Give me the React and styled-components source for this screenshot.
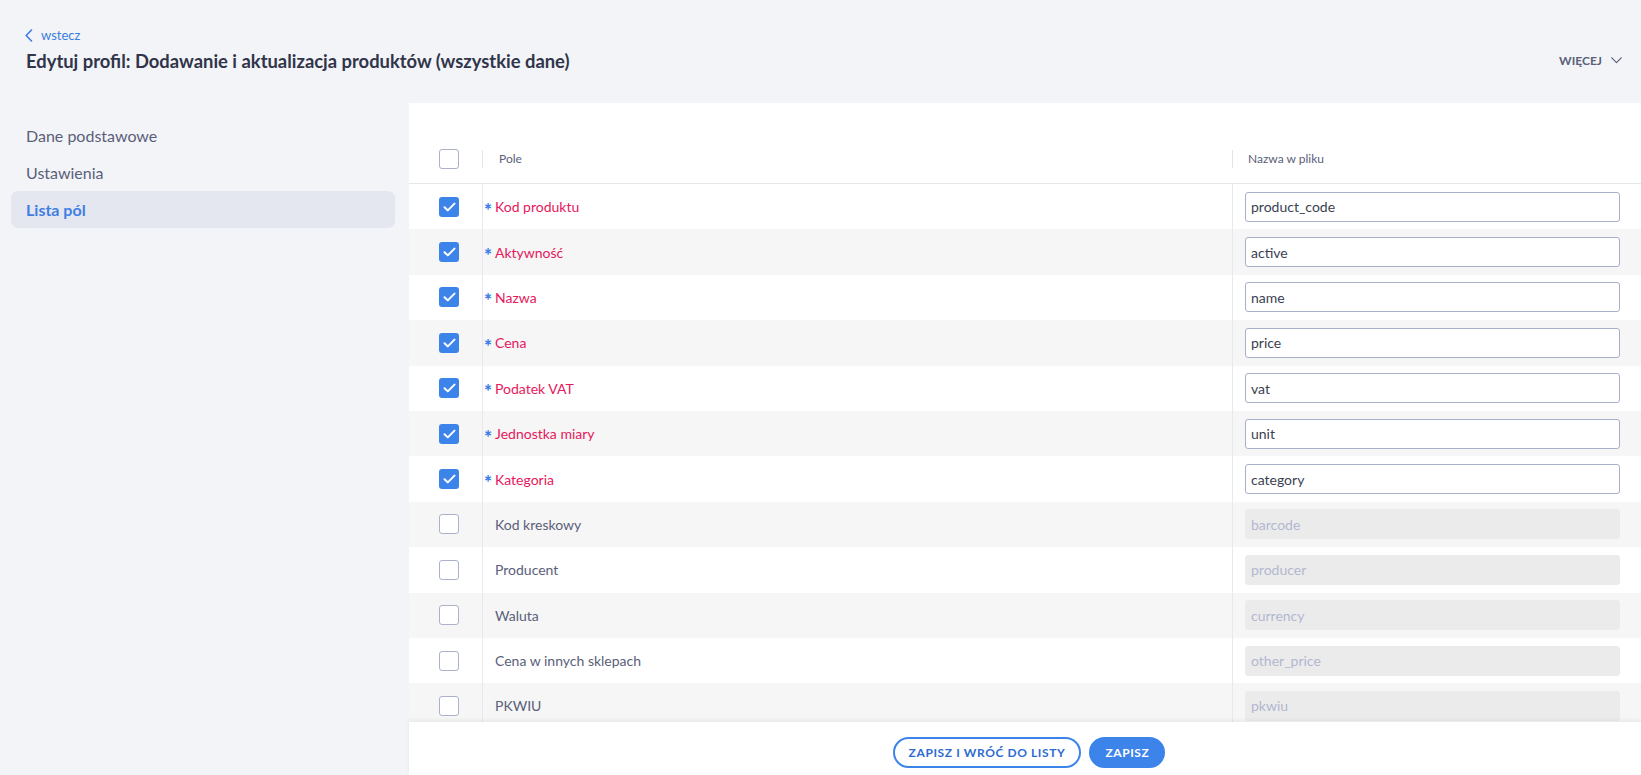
import React from "react";
import styled, { createGlobalStyle } from "styled-components";

const GlobalStyle = createGlobalStyle`
  html, body { margin: 0; padding: 0; }
  body {
    background: #f3f4f8;
    font-family: Lato, "Noto Sans", sans-serif;
    color: #4e546c;
    overflow: hidden;
  }
  * { box-sizing: border-box; }
`;

const Page = styled.div`
  height: 100vh;
  display: flex;
  flex-direction: column;
`;

const Header = styled.header`
  height: 103px;
  flex: none;
  display: flex;
  align-items: flex-start;
  justify-content: space-between;
  padding: 26px 19px 0 25px;
`;

const TitleBlock = styled.div`
  display: flex;
  flex-direction: column;
`;

const BackLink = styled.a`
  display: inline-flex;
  align-items: center;
  gap: 8px;
  font-size: 13px;
  color: #3b7ddd;
  text-decoration: none;
  height: 18px;
  cursor: pointer;
`;

const Title = styled.h1`
  margin: 5px 0 0 1px;
  font-size: 18.4px;
  font-weight: 700;
  color: #30354a;
  line-height: 24px;
`;

const MoreButton = styled.button`
  margin-top: 27px;
  display: inline-flex;
  align-items: center;
  gap: 9px;
  background: none;
  border: 0;
  padding: 0;
  font-family: inherit;
  font-size: 12px;
  font-weight: 700;
  color: #5a6079;
  cursor: pointer;
`;

const Main = styled.div`
  flex: 1;
  min-height: 0;
  display: flex;
`;

const Sidebar = styled.nav`
  width: 409px;
  flex: none;
  padding: 14px 14px 0 11px;
  display: flex;
  flex-direction: column;
`;

const NavItem = styled.a`
  height: 37px;
  display: flex;
  align-items: center;
  padding-left: 15px;
  border-radius: 7px;
  font-size: 16px;
  cursor: pointer;
  color: ${(p) => (p.$active ? "#3f7fe0" : "#5a5f78")};
  font-weight: ${(p) => (p.$active ? 700 : 400)};
  background: ${(p) => (p.$active ? "#e4e7f0" : "transparent")};
`;

const Panel = styled.section`
  flex: 1;
  min-width: 0;
  background: #ffffff;
  display: flex;
  flex-direction: column;
`;

const TableArea = styled.div`
  flex: 1;
  min-height: 0;
  overflow: hidden;
  padding-top: 31px;
`;

const cols = "73px 750px 1fr";

const HeadRow = styled.div`
  display: grid;
  grid-template-columns: ${cols};
  height: 50px;
  align-items: center;
  border-bottom: 1px solid #e6e7eb;
`;

const HeadSep = styled.div`
  display: flex;
  align-items: center;
  height: 100%;
  font-size: 12px;
  color: #5a6079;
  &::before {
    content: "";
    width: 1px;
    height: 18px;
    background: #e3e4e8;
    margin-right: ${(p) => p.$gap}px;
  }
`;

const Row = styled.div`
  display: grid;
  grid-template-columns: ${cols};
  height: 45.4px;
  background: ${(p) => (p.$alt ? "#f6f6f6" : "#ffffff")};
`;

const CheckCell = styled.div`
  display: flex;
  align-items: center;
  padding-left: 30px;
`;

const FieldCell = styled.div`
  display: flex;
  align-items: center;
  border-left: 1px solid #e8e9ec;
  padding-left: 1px;
  font-size: 14px;
  color: ${(p) => (p.$required ? "#e5185c" : "#5a6079")};
`;

const Star = styled.span`
  width: 11px;
  flex: none;
  color: #3d80e6;
  font-size: 19px;
  font-weight: 900;
  line-height: 1;
  margin-top: 5px;
`;

const NameCell = styled.div`
  display: flex;
  align-items: center;
  border-left: 1px solid #e8e9ec;
  padding-left: 12px;
`;

const NameInput = styled.input`
  width: 375px;
  height: 30px;
  border-radius: 3px;
  padding: 0 5px;
  font-family: inherit;
  font-size: 14px;
  outline: none;
  border: 1px solid ${(p) => (p.disabled ? "#ebebeb" : "#a8b0c9")};
  background: ${(p) => (p.disabled ? "#ebebeb" : "#ffffff")};
  color: ${(p) => (p.disabled ? "#b2b8d0" : "#3a3f52")};
  &:disabled { -webkit-text-fill-color: #b2b8d0; opacity: 1; }
`;

const Box = styled.span`
  width: 20px;
  height: 20px;
  border-radius: 3px;
  display: inline-flex;
  align-items: center;
  justify-content: center;
  background: ${(p) => (p.$checked ? "#3d84ea" : "#ffffff")};
  border: ${(p) => (p.$checked ? "none" : "1.5px solid #aab2cc")};
`;

const Footer = styled.footer`
  flex: none;
  height: 53px;
  background: #ffffff;
  position: relative;
  z-index: 1;
  box-shadow: 0 -2px 4px rgba(0, 0, 0, 0.06);
  display: flex;
  justify-content: center;
  align-items: flex-start;
  padding: 15px 0 0 8px;
  gap: 8px;
`;

const Button = styled.button`
  height: 31px;
  padding: 0 14px;
  border-radius: 16px;
  font-family: inherit;
  font-size: 12px;
  font-weight: 700;
  letter-spacing: 0.6px;
  cursor: pointer;
  border: 2px solid #3c84e9;
  background: ${(p) => (p.$primary ? "#3c84e9" : "#ffffff")};
  color: ${(p) => (p.$primary ? "#ffffff" : "#2d6bd0")};
`;

const Check = ({ checked }) => (
  <Box $checked={checked}>
    {checked && (
      <svg width="13" height="10" viewBox="0 0 13 10">
        <path d="M1.5 5.2 L4.8 8.4 L11.5 1.6" fill="none" stroke="#fff" strokeWidth="2" strokeLinecap="round" strokeLinejoin="round" />
      </svg>
    )}
  </Box>
);

const rows = [
  ["Kod produktu", "product_code", true],
  ["Aktywność", "active", true],
  ["Nazwa", "name", true],
  ["Cena", "price", true],
  ["Podatek VAT", "vat", true],
  ["Jednostka miary", "unit", true],
  ["Kategoria", "category", true],
  ["Kod kreskowy", "barcode", false],
  ["Producent", "producer", false],
  ["Waluta", "currency", false],
  ["Cena w innych sklepach", "other_price", false],
  ["PKWIU", "pkwiu", false],
];

export default function App() {
  return (
    <>
      <GlobalStyle />
      <Page>
        <Header>
          <TitleBlock>
            <BackLink>
              <svg width="8" height="13" viewBox="0 0 8 13">
                <path d="M6.5 1 L1.2 6.5 L6.5 12" fill="none" stroke="#3b7ddd" strokeWidth="1.6" strokeLinecap="round" strokeLinejoin="round" />
              </svg>
              wstecz
            </BackLink>
            <Title>Edytuj profil: Dodawanie i aktualizacja produktów (wszystkie dane)</Title>
          </TitleBlock>
          <MoreButton>
            WIĘCEJ
            <svg width="11" height="7" viewBox="0 0 11 7">
              <path d="M0.8 0.8 L5.5 5.6 L10.2 0.8" fill="none" stroke="#5a6079" strokeWidth="1.2" strokeLinecap="round" strokeLinejoin="round" />
            </svg>
          </MoreButton>
        </Header>
        <Main>
          <Sidebar>
            <NavItem>Dane podstawowe</NavItem>
            <NavItem>Ustawienia</NavItem>
            <NavItem $active>Lista pól</NavItem>
          </Sidebar>
          <Panel>
            <TableArea>
              <HeadRow>
                <CheckCell>
                  <Check checked={false} />
                </CheckCell>
                <HeadSep $gap={16}>Pole</HeadSep>
                <HeadSep $gap={15}>Nazwa w pliku</HeadSep>
              </HeadRow>
              {rows.map(([label, name, req], i) => (
                <Row key={name} $alt={i % 2 === 1}>
                  <CheckCell>
                    <Check checked={req} />
                  </CheckCell>
                  <FieldCell $required={req}>
                    <Star>{req ? "*" : ""}</Star>
                    {label}
                  </FieldCell>
                  <NameCell>
                    <NameInput defaultValue={name} disabled={!req} readOnly={req ? undefined : true} />
                  </NameCell>
                </Row>
              ))}
            </TableArea>
            <Footer>
              <Button>ZAPISZ I WRÓĆ DO LISTY</Button>
              <Button $primary>ZAPISZ</Button>
            </Footer>
          </Panel>
        </Main>
      </Page>
    </>
  );
}
